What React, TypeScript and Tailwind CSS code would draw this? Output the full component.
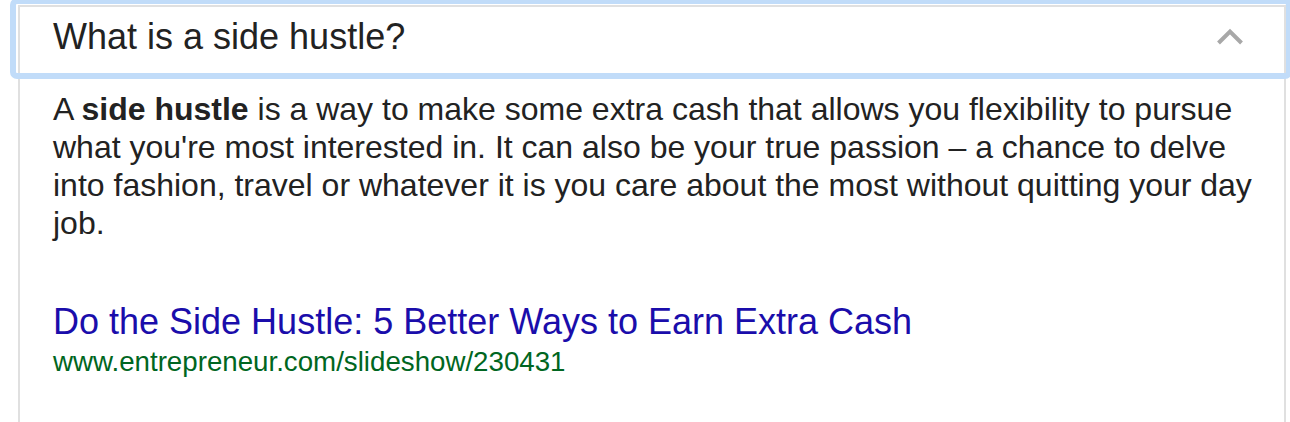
import React from "react";

const ChevronUp = () => {
  return (
    <svg
      width="28"
      height="18"
      viewBox="0 0 28 18"
      className="mt-[20px] mr-[40px] shrink-0"
    >
      <polyline
        points="2.5,16 14,4.5 25.5,16"
        fill="none"
        stroke="#a8a8a8"
        strokeWidth="4"
      />
    </svg>
  );
};

const App = () => {
  return (
    <div className="h-[422px] overflow-hidden bg-white pl-[18px] pt-[5px] font-['Liberation_Sans',Arial,sans-serif]">
      <div className="w-[1268px] h-[460px] border-x-2 border-t-2 border-[#e0e0e0]">
        <div className="relative flex h-[66px] items-start justify-between">
          <h1 className="pl-[33px] pt-[12px] text-[36px] leading-[36px] text-[#222]">
            What is a side hustle?
          </h1>
          <ChevronUp />
          {/* focus ring */}
          <span className="pointer-events-none absolute -left-[10px] -top-[9px] -right-[8px] -bottom-[6px] rounded-[7px] border-[6px] border-[#c1dcf9]"></span>
        </div>
        <div className="pl-[33px] pr-[30px] pt-[17px]">
          <p className="text-[32px] leading-[38px] text-[#222]">
            A <b>side hustle</b> is a way to make some extra cash that allows
            you flexibility to pursue what you're most interested in. It can
            also be your true passion – a chance to delve into fashion, travel
            or whatever it is you care about the most without quitting your day
            job.
          </p>
          <div className="mt-[60px]">
            <a className="block text-[36px] leading-[40px] text-[#1a0dab]">
              Do the Side Hustle: 5 Better Ways to Earn Extra Cash
            </a>
            <div className="mt-[3px] text-[27.7px] leading-[34px] text-[#006621]">
              www.entrepreneur.com/slideshow/230431
            </div>
          </div>
        </div>
      </div>
    </div>
  );
};

export default App;
